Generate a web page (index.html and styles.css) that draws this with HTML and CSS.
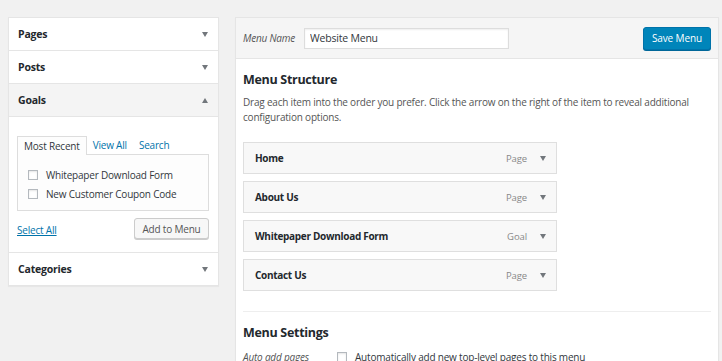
FILE: index.html
```html
<!DOCTYPE html>
<html lang="en">
  <head>
    <meta charset="UTF-8" />
    <meta name="viewport" content="width=device-width, initial-scale=1.0" />
    <title>Menus</title>
    <link rel="stylesheet" href="styles.css">
  </head>
  <body>
    <div class="wrap">
      <div class="sidebar">
        <div class="accordion">
          <div class="section-title">Pages <span class="arrow"></span></div>
          <div class="section-title">Posts <span class="arrow"></span></div>
          <div class="section-title open">Goals <span class="arrow up"></span></div>
          <div class="section-body">
            <div class="tabs">
              <span class="tab active">Most Recent</span>
              <a class="tab" href="#">View All</a>
              <a class="tab" href="#">Search</a>
            </div>
            <div class="tab-panel">
              <label class="check-row"><span class="checkbox"></span>Whitepaper Download Form</label>
              <label class="check-row"><span class="checkbox"></span>New Customer Coupon Code</label>
            </div>
            <div class="actions">
              <a class="select-all" href="#">Select All</a>
              <button class="btn">Add to Menu</button>
            </div>
          </div>
          <div class="section-title last">Categories <span class="arrow"></span></div>
        </div>
      </div>

      <div class="main">
        <div class="header">
          <label class="name-label">Menu Name</label>
          <input class="name-input" type="text" value="Website Menu" />
          <button class="btn-primary">Save Menu</button>
        </div>
        <div class="body">
          <h3>Menu Structure</h3>
          <p class="desc">Drag each item into the order you prefer. Click the arrow on the right of the item to reveal additional configuration options.</p>
          <ul class="menu-items">
            <li class="menu-item"><span>Home</span><span class="meta">Page <span class="arrow"></span></span></li>
            <li class="menu-item"><span>About Us</span><span class="meta">Page <span class="arrow"></span></span></li>
            <li class="menu-item"><span>Whitepaper Download Form</span><span class="meta">Goal <span class="arrow"></span></span></li>
            <li class="menu-item"><span>Contact Us</span><span class="meta">Page <span class="arrow"></span></span></li>
          </ul>
          <div class="divider"></div>
          <h3>Menu Settings</h3>
          <div class="setting-row">
            <span class="setting-label">Auto add pages</span>
            <label class="check-row"><span class="checkbox"></span>Automatically add new top-level pages to this menu</label>
          </div>
        </div>
      </div>
    </div>
  </body>
</html>
```

FILE: styles.css
```css
body {
  margin: 0;
  background-color: #f1f1f1;
  color: #23282d;
  font-family: "Open Sans", "Noto Sans", sans-serif;
  font-size: 10px;
  letter-spacing: -0.2px;
  overflow: hidden;
}
.wrap {
  display: flex;
  gap: 16px;
  padding: 17px 0 0 8px;
  align-items: flex-start;
}
.sidebar {
  width: 211px;
  flex: none;
}
.accordion {
  background-color: #ffffff;
  border: 1px solid #e5e5e5;
  box-shadow: 0 1px 1px rgba(0, 0, 0, 0.04);
}
.section-title {
  height: 32px;
  padding: 0 10px 0 9px;
  display: flex;
  justify-content: space-between;
  align-items: center;
  font-weight: 700;
  font-size: 10.5px;
  border-bottom: 1px solid #e5e5e5;
}
.section-title.open {
  background-color: #f4f4f4;
}
.section-title.last {
  border-bottom: none;
}
.arrow {
  display: inline-block;
  width: 0;
  height: 0;
  border-left: 3px solid transparent;
  border-right: 3px solid transparent;
  border-top: 5px solid #72777c;
}
.arrow.up {
  border-top: none;
  border-bottom: 5px solid #72777c;
}
.section-body {
  padding: 18px 9px 13px 8px;
  border-bottom: 1px solid #e5e5e5;
}
.tabs {
  display: flex;
  align-items: flex-end;
  height: 19px;
}
.tab {
  padding: 0 6px;
  line-height: 18px;
  color: #0073aa;
  text-decoration: none;
}
.tab.active {
  color: #32373c;
  border: 1px solid #dddddd;
  border-bottom: none;
  background-color: #fdfdfd;
  margin-bottom: -1px;
  position: relative;
}
.tab-panel {
  border: 1px solid #dddddd;
  background-color: #fdfdfd;
  height: 43px;
  padding: 12px 10px 0 10px;
  display: flex;
  flex-direction: column;
  gap: 3px;
}
.check-row {
  display: flex;
  align-items: center;
  gap: 8px;
  color: #32373c;
  line-height: 16px;
}
.checkbox {
  width: 8px;
  height: 8px;
  border: 1px solid #b4b9be;
  background-color: #ffffff;
  box-shadow: inset 0 1px 2px rgba(0, 0, 0, 0.1);
  flex: none;
}
.actions {
  display: flex;
  justify-content: space-between;
  align-items: center;
  margin-top: 7px;
}
.select-all {
  color: #0073aa;
  text-decoration: underline;
  margin-top: 3px;
}
.btn {
  font-family: inherit;
  font-size: 10px;
  letter-spacing: -0.2px;
  color: #555555;
  background-color: #f7f7f7;
  border: 1px solid #cccccc;
  border-radius: 3px;
  box-shadow: 0 1px 0 #cccccc;
  height: 21px;
  width: 75px;
  padding: 0;
}
.main {
  width: 482px;
  flex: none;
  background-color: #ffffff;
  border: 1px solid #e5e5e5;
  box-shadow: 0 1px 1px rgba(0, 0, 0, 0.04);
}
.header {
  height: 40px;
  background-color: #f5f5f5;
  border-bottom: 1px solid #e5e5e5;
  display: flex;
  align-items: center;
  padding: 0 7px;
}
.name-label {
  font-style: italic;
  color: #555555;
  width: 61px;
}
.name-input {
  width: 193px;
  height: 17px;
  border: 1px solid #dddddd;
  box-shadow: inset 0 1px 2px rgba(0, 0, 0, 0.07);
  font-family: inherit;
  font-size: 10.5px;
  letter-spacing: -0.2px;
  color: #32373c;
  padding: 1px 5px;
}
.btn-primary {
  margin-left: auto;
  height: 23px;
  width: 68px;
  padding: 0;
  font-family: inherit;
  font-size: 10px;
  letter-spacing: -0.1px;
  color: #ffffff;
  background-color: #0085ba;
  border: 1px solid #0073aa;
  border-radius: 3px;
  box-shadow: 0 1px 0 #006799;
}
.body {
  padding: 0 7px;
}
h3 {
  font-size: 12.5px;
  letter-spacing: -0.3px;
  font-weight: 700;
  margin: 11px 0 0 0;
  line-height: 20px;
}
.desc {
  color: #555555;
  line-height: 15px;
  margin: 5px 0 17px 0;
}
.menu-items {
  list-style: none;
  margin: 0;
  padding: 0;
  width: 314px;
  display: flex;
  flex-direction: column;
  gap: 7px;
}
.menu-item {
  height: 30px;
  padding: 0 10px 0 11px;
  background-color: #f8f8f8;
  border: 1px solid #dfdfdf;
  display: flex;
  justify-content: space-between;
  align-items: center;
  font-weight: 700;
  font-size: 10px;
  letter-spacing: -0.3px;
}
.meta {
  font-weight: 400;
  font-size: 9.5px;
  letter-spacing: -0.1px;
  color: #888888;
  display: flex;
  align-items: center;
  gap: 13px;
}
.divider {
  border-top: 1px solid #eeeeee;
  margin-top: 20px;
}
.setting-row {
  display: flex;
  align-items: center;
  margin-top: 6px;
}
.setting-label {
  font-style: italic;
  color: #555555;
  width: 94px;
}
```
